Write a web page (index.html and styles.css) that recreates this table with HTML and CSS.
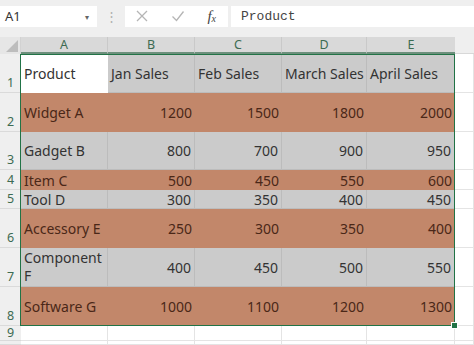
FILE: index.html
```html
<!DOCTYPE html>
<html lang="en">
<head>
    <meta charset="UTF-8">
    <title>Sheet</title>
    <link rel="stylesheet" href="styles.css">
</head>
<body>
    <div class="toolbar">
        <div class="name-box">
            <span>A1</span>
            <span class="caret">&#9662;</span>
        </div>
        <div class="grip">&#8942;</div>
        <div class="fx-box">
            <svg width="14" height="14" viewBox="0 0 14 14"><path d="M2 2 L12 12 M12 2 L2 12" stroke="#b5b5b5" stroke-width="1.3" fill="none"/></svg>
            <svg width="14" height="14" viewBox="0 0 14 14"><path d="M1.5 7.5 L5.5 11.5 L12.5 2.5" stroke="#b5b5b5" stroke-width="1.3" fill="none"/></svg>
            <span class="fx">f<sub>x</sub></span>
        </div>
        <div class="formula">Product</div>
    </div>

    <div class="sheet">
        <div class="corner"><span class="tri"></span></div>
        <div class="col-head sel">A</div>
        <div class="col-head sel">B</div>
        <div class="col-head sel">C</div>
        <div class="col-head sel">D</div>
        <div class="col-head sel last">E</div>
        <div class="col-head rest"></div>

        <div class="row-head">1</div>
        <div class="cell white">Product</div>
        <div class="cell gray">Jan Sales</div>
        <div class="cell gray">Feb Sales</div>
        <div class="cell gray">March Sales</div>
        <div class="cell gray">April Sales</div>
        <div class="cell empty"></div>

        <div class="row-head">2</div>
        <div class="cell orange">Widget A</div>
        <div class="cell orange num">1200</div>
        <div class="cell orange num">1500</div>
        <div class="cell orange num">1800</div>
        <div class="cell orange num">2000</div>
        <div class="cell empty"></div>

        <div class="row-head">3</div>
        <div class="cell gray">Gadget B</div>
        <div class="cell gray num">800</div>
        <div class="cell gray num">700</div>
        <div class="cell gray num">900</div>
        <div class="cell gray num">950</div>
        <div class="cell empty"></div>

        <div class="row-head short">4</div>
        <div class="cell orange">Item C</div>
        <div class="cell orange num">500</div>
        <div class="cell orange num">450</div>
        <div class="cell orange num">550</div>
        <div class="cell orange num">600</div>
        <div class="cell empty"></div>

        <div class="row-head short">5</div>
        <div class="cell gray">Tool D</div>
        <div class="cell gray num">300</div>
        <div class="cell gray num">350</div>
        <div class="cell gray num">400</div>
        <div class="cell gray num">450</div>
        <div class="cell empty"></div>

        <div class="row-head">6</div>
        <div class="cell orange">Accessory E</div>
        <div class="cell orange num">250</div>
        <div class="cell orange num">300</div>
        <div class="cell orange num">350</div>
        <div class="cell orange num">400</div>
        <div class="cell empty"></div>

        <div class="row-head">7</div>
        <div class="cell gray wrap">Component F</div>
        <div class="cell gray num">400</div>
        <div class="cell gray num">450</div>
        <div class="cell gray num">500</div>
        <div class="cell gray num">550</div>
        <div class="cell empty"></div>

        <div class="row-head">8</div>
        <div class="cell orange">Software G</div>
        <div class="cell orange num">1000</div>
        <div class="cell orange num">1100</div>
        <div class="cell orange num">1200</div>
        <div class="cell orange num">1300</div>
        <div class="cell empty"></div>

        <div class="row-head short">9</div>
        <div class="cell empty"></div>
        <div class="cell empty"></div>
        <div class="cell empty"></div>
        <div class="cell empty"></div>
        <div class="cell empty"></div>
        <div class="cell empty"></div>

        <div class="row-head"></div>
        <div class="cell empty"></div>
        <div class="cell empty"></div>
        <div class="cell empty"></div>
        <div class="cell empty"></div>
        <div class="cell empty"></div>
        <div class="cell empty"></div>

        <div class="selection"><span class="handle"></span></div>
    </div>
</body>
</html>
```

FILE: styles.css
```css
body {
    margin: 0;
    font-family: "Noto Sans", "Open Sans", sans-serif;
    background: #ffffff;
    width: 474px;
    height: 345px;
    overflow: hidden;
}
.toolbar {
    display: flex;
    align-items: center;
    height: 37px;
    background: #efefef;
    padding-bottom: 5px;
    box-sizing: border-box;
}
.name-box {
    display: flex;
    align-items: center;
    justify-content: space-between;
    width: 97px;
    height: 21px;
    background: #fff;
    padding: 0 8px 0 5px;
    box-sizing: border-box;
    font-size: 13px;
    color: #333;
}
.caret {
    font-size: 8px;
    color: #666;
}
.grip {
    width: 28px;
    text-align: center;
    color: #b0b0b0;
    font-size: 13px;
}
.fx-box {
    display: flex;
    align-items: center;
    justify-content: space-between;
    width: 103px;
    height: 21px;
    background: #fff;
    padding: 0 12px 0 10px;
    box-sizing: border-box;
}
.fx {
    font-family: "Liberation Serif", serif;
    font-style: italic;
    font-size: 15px;
    color: #444;
}
.fx sub {
    font-size: 10px;
    vertical-align: -1px;
}
.formula {
    flex: 1;
    height: 21px;
    margin-left: 3px;
    background: #fff;
    padding-left: 10px;
    font-family: "Liberation Mono", monospace;
    font-size: 13px;
    line-height: 21px;
    color: #444;
}
.sheet {
    position: relative;
    display: grid;
    grid-template-columns: 21px 87px 87px 87px 85px 88px 1fr;
    grid-template-rows: 17px 39px 39px 38px 20px 19px 39px 39px 39px 15px 1fr;
    height: 308px;
}
.corner {
    background: #e6e6e6;
    border-right: 1px solid #d2d2d2;
    position: relative;
}
.tri {
    position: absolute;
    right: 2px;
    bottom: 2px;
    border-left: 12px solid transparent;
    border-bottom: 12px solid #bdbdbd;
}
.col-head {
    display: flex;
    align-items: center;
    justify-content: center;
    font-size: 12.5px;
    color: #555;
    border-right: 1px solid #c9c9c9;
}
.col-head.sel {
    background: #d9d9d9;
    color: #3d6b52;
    border-bottom: 2px solid #6d8f7c;
}
.col-head.last {
    border-right: none;
}
.col-head.rest {
    background: #efefef;
    border-right: none;
    border-bottom: 1px solid #d8d8d8;
}
.row-head {
    display: flex;
    align-items: flex-end;
    justify-content: center;
    background: #efefef;
    font-size: 12.5px;
    line-height: 14px;
    padding-bottom: 2px;
    color: #3d6b52;
    border-bottom: 1px solid #dadada;
    box-sizing: border-box;
}
.row-head.short {
    align-items: center;
    padding-bottom: 0;
}
.cell {
    display: flex;
    align-items: center;
    padding: 0 3px;
    font-size: 14px;
    color: #333;
    box-sizing: border-box;
    white-space: nowrap;
    overflow: hidden;
}
.cell.num {
    justify-content: flex-end;
}
.cell.white {
    background: #fff;
}
.cell.gray {
    background: #cbcbcb;
    border-right: 1px solid #bcbcbc;
    border-bottom: 1px solid #bcbcbc;
}
.cell.orange {
    background: #c2876a;
    color: #4a2718;
}
.cell.wrap {
    white-space: normal;
    line-height: 18px;
}
.cell.empty {
    border-right: 1px solid #e4e4e4;
    border-bottom: 1px solid #e4e4e4;
}
.selection {
    position: absolute;
    left: 20px;
    top: 17px;
    width: 435px;
    height: 272px;
    box-sizing: border-box;
    border: 1px solid #217346;
    pointer-events: none;
}
.handle {
    position: absolute;
    right: -4px;
    bottom: -4px;
    width: 5px;
    height: 5px;
    background: #217346;
    border: 1px solid #fff;
}
```
